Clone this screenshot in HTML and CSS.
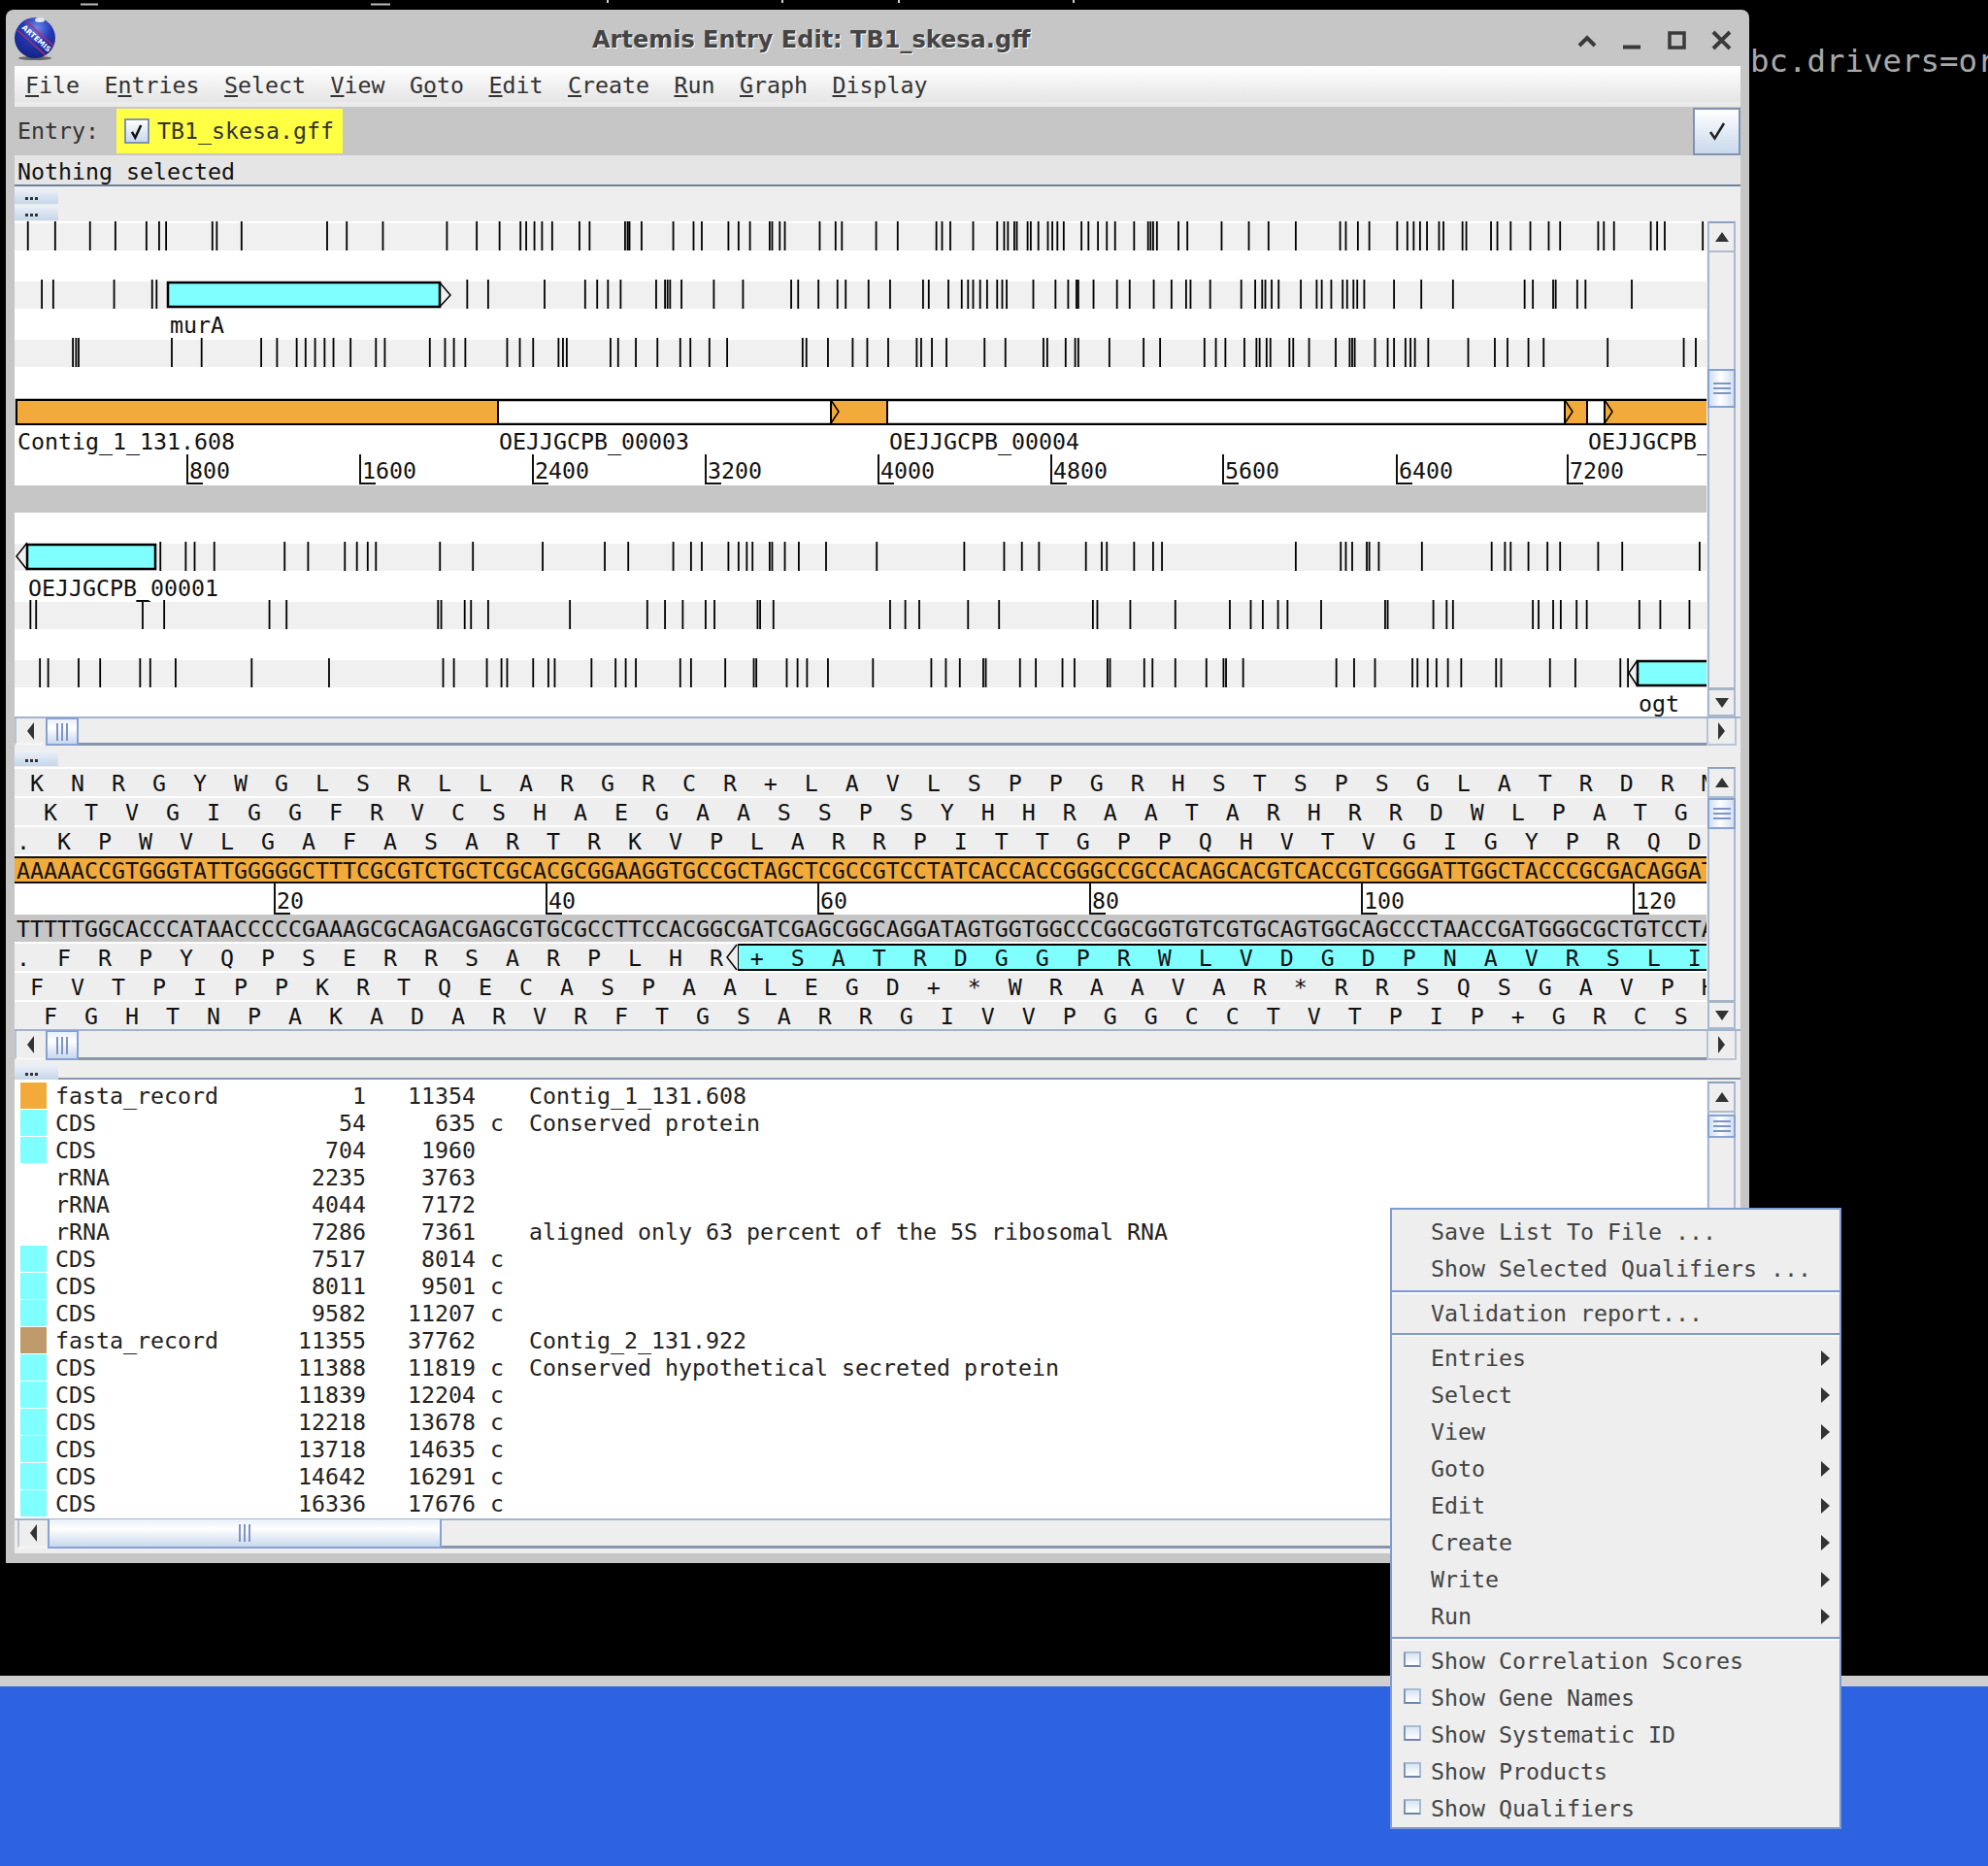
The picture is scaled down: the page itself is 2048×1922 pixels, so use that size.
FILE: index.html
```html
<!DOCTYPE html>
<html lang="en">
<head>
<meta charset="utf-8">
<title>Artemis Entry Edit: TB1_skesa.gff</title>
<link rel="stylesheet" href="styles.css">
</head>
<body>
<div class="desktop">
  <svg class="stray" width="2048" height="8" viewBox="0 0 2048 8"><path d="M83 4.500h18M382 4.500h20" stroke="#bbb" stroke-width="2"/><path d="M626 0v3M806 0v3M926 0v3M1106 0v3" stroke="#ccc" stroke-width="2"/></svg>
  <div class="terminal-text">bc.drivers=or</div>
  <div class="desk-fill"></div>
  <div class="panel-edge"></div>
  <div class="panel"></div>

  <section class="window">
    <header class="titlebar">
      <svg class="logo" width="46" height="46" viewBox="0 0 46 46">
        <defs>
          <radialGradient id="ball" cx="0.55" cy="0.25" r="0.8"><stop offset="0" stop-color="#6f86ea"/><stop offset="0.45" stop-color="#2238b8"/><stop offset="1" stop-color="#14207c"/></radialGradient>
        </defs>
        <ellipse cx="23" cy="43" rx="17" ry="2" fill="#666"/>
        <circle cx="23" cy="22" r="21" fill="url(#ball)"/>
        <path d="M14 5L42 30M5 14L34 40" stroke="#b03060" stroke-width="1.500" fill="none"/>
        <text class="logo-text" x="0" y="0" transform="translate(9 12) rotate(42)">ARTEMIS</text>
        <ellipse cx="28" cy="3.500" rx="5" ry="2.500" fill="#dfe8ef"/>
      </svg>
      <div class="title">Artemis Entry Edit: TB1_skesa.gff</div>
      <svg class="winbtns" width="170" height="24" viewBox="1620 30 170 24">
        <path d="M1627 47l8-8 8 8" fill="none" stroke="#3a3a3a" stroke-width="4"/>
        <path d="M1672 48.500h18" fill="none" stroke="#3a3a3a" stroke-width="4"/>
        <rect x="1720" y="34" width="15" height="15" fill="none" stroke="#3a3a3a" stroke-width="3.500"/>
        <path d="M1765 33l17 17M1782 33l-17 17" fill="none" stroke="#3a3a3a" stroke-width="4"/>
      </svg>
    </header>

    <div class="content">
      <nav class="menubar">
        <span><u>F</u>ile</span><span>E<u>n</u>tries</span><span><u>S</u>elect</span><span><u>V</u>iew</span><span>G<u>o</u>to</span><span><u>E</u>dit</span><span><u>C</u>reate</span><span><u>R</u>un</span><span><u>G</u>raph</span><span><u>D</u>isplay</span>
      </nav>
      <div class="entrybar">
        <span class="entry-label">Entry:</span>
        <span class="entry-chip">
          <svg class="entry-check" width="26" height="26" viewBox="0 0 26 26"><path d="M7 14l4 7L18 6" fill="none" stroke="#111" stroke-width="3"/></svg>
          <span>TB1_skesa.gff</span>
        </span>
        <button class="okbtn" type="button"><svg width="18" height="20" viewBox="0 0 18 20"><path d="M2 11l4.500 6.500L16 2" fill="none" stroke="#222" stroke-width="2.500"/></svg></button>
      </div>
      <div class="status">Nothing selected</div>

      <div class="splitter splitter-double"><span class="grip"><i></i><i></i><i></i></span><span class="grip"><i></i><i></i><i></i></span></div>

      <div class="pane">
        <div class="features">
          <svg class="track" viewBox="15 0 1743 30"><path class="ticks" transform="scale(.6531 1)" d="M44 0v30M87 0v30M142 0v30M182 0v30M231 0v30M251 0v30M262 0v30M335 0v30M342 0v30M381 0v30M516 0v30M547 0v30M604 0v30M705 0v30M752 0v30M788 0v30M821 0v30M830 0v30M843 0v30M855 0v30M871 0v30M914 0v30M930 0v30M986 0v30M990 0v30M993 0v30M1012 0v30M1062 0v30M1094 0v30M1107 0v30M1149 0v30M1165 0v30M1183 0v30M1214 0v30M1218 0v30M1230 0v30M1238 0v30M1293 0v30M1318 0v30M1328 0v30M1382 0v30M1416 0v30M1477 0v30M1486 0v30M1499 0v30M1535 0v30"/><path class="ticks" transform="translate(1024 0) scale(.6531 1)" d="M5 0v30M16 0v30M22 0v30M32 0v30M36 0v30M53 0v30M58 0v30M70 0v30M85 0v30M92 0v30M100 0v30M110 0v30M138 0v30M149 0v30M164 0v30M178 0v30M191 0v30M221 0v30M243 0v30M247 0v30M251 0v30M257 0v30M291 0v30M305 0v30M359 0v30M402 0v30M433 0v30M476 0v30M546 0v30M555 0v30M574 0v30M592 0v30M636 0v30M652 0v30M662 0v30M672 0v30M683 0v30M702 0v30M709 0v30M739 0v30M745 0v30M784 0v30M794 0v30M815 0v30M846 0v30M875 0v30M893 0v30M953 0v30M962 0v30M978 0v30M1036 0v30M1046 0v30M1058 0v30M1118 0v30"/></svg>

          <svg class="track" viewBox="15 0 1743 30"><path class="ticks" transform="scale(.6531 1)" d="M66 0v30M84 0v30M180 0v30M240 0v30M247 0v30M737 0v30M770 0v30M859 0v30M923 0v30M942 0v30M959 0v30M979 0v30M1035 0v30M1049 0v30M1053 0v30M1057 0v30M1075 0v30M1126 0v30M1172 0v30M1248 0v30M1259 0v30M1291 0v30M1321 0v30M1334 0v30M1370 0v30M1404 0v30M1456 0v30M1465 0v30M1496 0v30M1517 0v30M1527 0v30M1535 0v30M1546 0v30M1557 0v30"/><path class="ticks" transform="translate(1024 0) scale(.6531 1)" d="M5 0v30M13 0v30M20 0v30M62 0v30M97 0v30M117 0v30M130 0v30M133 0v30M157 0v30M194 0v30M214 0v30M252 0v30M280 0v30M303 0v30M310 0v30M341 0v30M390 0v30M412 0v30M423 0v30M428 0v30M438 0v30M449 0v30M484 0v30M509 0v30M517 0v30M532 0v30M550 0v30M557 0v30M567 0v30M573 0v30M584 0v30M631 0v30M674 0v30M724 0v30M837 0v30M850 0v30M882 0v30M886 0v30M920 0v30M933 0v30M1006 0v30"/><rect class="cds" x="173" y="3" width="280" height="25"/><path class="chev" d="M453 3l11 13-11 12"/></svg>

          <svg class="track" viewBox="15 0 1743 30"><path class="ticks" transform="scale(.6531 1)" d="M115 0v30M120 0v30M124 0v30M271 0v30M318 0v30M412 0v30M437 0v30M468 0v30M482 0v30M497 0v30M512 0v30M526 0v30M553 0v30M593 0v30M607 0v30M678 0v30M702 0v30M716 0v30M734 0v30M800 0v30M820 0v30M841 0v30M881 0v30M888 0v30M894 0v30M963 0v30M975 0v30M1003 0v30M1037 0v30M1073 0v30M1089 0v30M1119 0v30M1147 0v30M1266 0v30M1272 0v30M1306 0v30M1345 0v30M1368 0v30M1401 0v30M1446 0v30M1453 0v30M1470 0v30M1493 0v30M1553 0v30"/><path class="ticks" transform="translate(1024 0) scale(.6531 1)" d="M18 0v30M78 0v30M84 0v30M113 0v30M128 0v30M133 0v30M182 0v30M236 0v30M262 0v30M332 0v30M350 0v30M365 0v30M395 0v30M414 0v30M419 0v30M430 0v30M436 0v30M466 0v30M472 0v30M497 0v30M539 0v30M561 0v30M565 0v30M569 0v30M601 0v30M621 0v30M631 0v30M649 0v30M657 0v30M664 0v30M685 0v30M748 0v30M790 0v30M810 0v30M843 0v30M867 0v30M968 0v30M1088 0v30M1107 0v30"/></svg>

          <svg class="dnaline" viewBox="15 0 1743 30">
            <rect class="dna-bg" x="17" y="4" width="1745" height="25"/>
            <rect class="contig" x="17" y="4" width="496" height="25"/>
            <rect class="contig" x="856" y="4" width="58" height="25"/>
            <rect class="contig" x="1612" y="4" width="23" height="25"/>
            <rect class="contig" x="1653" y="4" width="107" height="25"/>
            <path class="chev" d="M856 4l8 12-8 12M1612 4l8 12-8 12M1653 4l8 12-8 12"/>
          </svg>
          <div class="grayband"></div>

          <svg class="track track-rev" viewBox="15 0 1743 30"><path class="ticks" transform="scale(.6531 1)" d="M253 0v30M293 0v30M307 0v30M338 0v30M449 0v30M486 0v30M544 0v30M563 0v30M580 0v30M593 0v30M694 0v30M746 0v30M856 0v30M954 0v30M991 0v30M1062 0v30M1090 0v30M1107 0v30M1149 0v30M1165 0v30M1178 0v30M1187 0v30M1214 0v30M1218 0v30M1238 0v30M1260 0v30M1303 0v30M1383 0v30M1521 0v30"/><path class="ticks" transform="translate(1024 0) scale(.6531 1)" d="M16 0v30M44 0v30M71 0v30M145 0v30M170 0v30M178 0v30M221 0v30M251 0v30M265 0v30M476 0v30M547 0v30M555 0v30M565 0v30M588 0v30M592 0v30M607 0v30M675 0v30M785 0v30M806 0v30M815 0v30M843 0v30M873 0v30M893 0v30M953 0v30M991 0v30M1113 0v30"/><rect class="cds" x="28" y="3" width="132" height="25"/><path class="chev" d="M28 1l-11 14 11 14"/></svg>

          <svg class="track" viewBox="15 0 1743 30"><path class="ticks" transform="scale(.6531 1)" d="M48 0v30M57 0v30M225 0v30M215 1h20M259 0v30M425 0v30M452 0v30M691 0v30M696 0v30M733 0v30M743 0v30M770 0v30M899 0v30M1021 0v30M1049 0v30M1077 0v30M1113 0v30M1127 0v30M1195 0v30M1199 0v30M1220 0v30M1404 0v30M1428 0v30M1450 0v30M1527 0v30"/><path class="ticks" transform="translate(1024 0) scale(.6531 1)" d="M8 0v30M156 0v30M163 0v30M215 0v30M286 0v30M372 0v30M405 0v30M424 0v30M448 0v30M463 0v30M516 0v30M617 0v30M621 0v30M693 0v30M714 0v30M724 0v30M850 0v30M859 0v30M882 0v30M894 0v30M919 0v30M935 0v30M1018 0v30M1051 0v30M1097 0v30"/></svg>

          <svg class="track" viewBox="15 0 1743 30"><path class="ticks" transform="scale(.6531 1)" d="M63 0v30M76 0v30M124 0v30M158 0v30M221 0v30M237 0v30M277 0v30M397 0v30M519 0v30M699 0v30M716 0v30M768 0v30M791 0v30M800 0v30M841 0v30M865 0v30M875 0v30M933 0v30M971 0v30M987 0v30M1003 0v30M1073 0v30M1090 0v30M1144 0v30M1189 0v30M1193 0v30M1241 0v30M1258 0v30M1273 0v30M1306 0v30M1377 0v30M1469 0v30M1492 0v30M1514 0v30M1551 0v30M1555 0v30"/><path class="ticks" transform="translate(1024 0) scale(.6531 1)" d="M41 0v30M66 0v30M108 0v30M127 0v30M179 0v30M183 0v30M237 0v30M250 0v30M286 0v30M335 0v30M362 0v30M366 0v30M393 0v30M540 0v30M568 0v30M601 0v30M660 0v30M668 0v30M684 0v30M698 0v30M716 0v30M737 0v30M792 0v30M800 0v30M877 0v30M917 0v30M988 0v30M1000 0v30"/><rect class="cds" x="1687" y="3" width="80" height="25"/><path class="chev" d="M1687 2l-9 13 9 14"/></svg>

          <span class="lbl" style="left:160px;top:93px">murA</span>
          <span class="lbl" style="left:3px;top:213px">Contig_1_131.608</span>
          <span class="lbl" style="left:499px;top:213px">OEJJGCPB_00003</span>
          <span class="lbl" style="left:901px;top:213px">OEJJGCPB_00004</span>
          <span class="lbl" style="left:1621px;top:213px">OEJJGCPB_00005</span>
          <span class="lbl" style="left:14px;top:364px">OEJJGCPB_00001</span>
          <span class="lbl" style="left:1673px;top:483px">ogt</span>

          <span class="tick" style="left:178px;top:240px">800</span>
          <span class="tick" style="left:356px;top:240px">1600</span>
          <span class="tick" style="left:534px;top:240px">2400</span>
          <span class="tick" style="left:712px;top:240px">3200</span>
          <span class="tick" style="left:890px;top:240px">4000</span>
          <span class="tick" style="left:1068px;top:240px">4800</span>
          <span class="tick" style="left:1245px;top:240px">5600</span>
          <span class="tick" style="left:1424px;top:240px">6400</span>
          <span class="tick" style="left:1600px;top:240px">7200</span>
        </div>
        <div class="vbar">
          <div class="sbtn"><b class="tri-up"></b></div>
          <div class="vtrack vtrack-features"><div class="vthumb"><i class="lines-h"></i></div></div>
          <div class="sbtn"><b class="tri-down"></b></div>
        </div>
      </div>
      <div class="hbar">
        <div class="hbtn"><b class="tri-left"></b></div><div class="hthumb"><i class="lines-v"></i></div><div class="htrack"></div><div class="hbtn hbtn-end"><b class="tri-right"></b></div>
      </div>

      <div class="splitter"><span class="grip"><i></i><i></i><i></i></span></div>

      <div class="pane pane-bases">
        <div class="bases">
<div class="seq"> K  N  R  G  Y  W  G  L  S  R  L  L  A  R  G  R  C  R  +  L  A  V  L  S  P  P  G  R  H  S  T  S  P  S  G  L  A  T  R  D  R  M</div>
<div class="seq">  K  T  V  G  I  G  G  F  R  V  C  S  H  A  E  G  A  A  S  S  P  S  Y  H  H  R  A  A  T  A  R  H  R  R  D  W  L  P  A  T  G</div>
<div class="seq">.  K  P  W  V  L  G  A  F  A  S  A  R  T  R  K  V  P  L  A  R  R  P  I  T  T  G  P  P  Q  H  V  T  V  G  I  G  Y  P  R  Q  D</div>
<div class="seq dna">AAAAACCGTGGGTATTGGGGGCTTTCGCGTCTGCTCGCACGCGGAAGGTGCCGCTAGCTCGCCGTCCTATCACCACCGGGCCGCCACAGCACGTCACCGTCGGGATTGGCTACCCGCGACAGGAT</div>
<div class="basescale"><span class="tick tick-base" style="left:268px">20</span><span class="tick tick-base" style="left:548px">40</span><span class="tick tick-base" style="left:828px">60</span><span class="tick tick-base" style="left:1108px">80</span><span class="tick tick-base" style="left:1388px">100</span><span class="tick tick-base" style="left:1668px">120</span></div>
<div class="seq dnarev">TTTTTGGCACCCATAACCCCCGAAAGCGCAGACGAGCGTGCGCCTTCCACGGCGATCGAGCGGCAGGATAGTGGTGGCCCGGCGGTGTCGTGCAGTGGCAGCCCTAACCGATGGGCGCTGTCCTA</div>
<div class="seq"><span class="seqbox"><svg class="seqchev" width="12" height="28" viewBox="0 0 12 28"><path d="M11 1L1 14l10 13" fill="none" stroke="#000" stroke-width="1.500"/></svg></span><span class="seqtext">.  F  R  P  Y  Q  P  S  E  R  R  S  A  R  P  L  H  R  +  S  A  T  R  D  G  G  P  R  W  L  V  D  G  D  P  N  A  V  R  S  L  I</span></div>
<div class="seq"> F  V  T  P  I  P  P  K  R  T  Q  E  C  A  S  P  A  A  L  E  G  D  +  *  W  R  A  A  V  A  R  *  R  R  S  Q  S  G  A  V  P  H</div>
<div class="seq">  F  G  H  T  N  P  A  K  A  D  A  R  V  R  F  T  G  S  A  R  R  G  I  V  V  P  G  G  C  C  T  V  T  P  I  P  +  G  R  C  S</div>
        </div>
        <div class="vbar">
          <div class="sbtn"><b class="tri-up"></b></div>
          <div class="vtrack"><div class="vthumb vthumb-small"><i class="lines-h"></i></div></div>
          <div class="sbtn"><b class="tri-down"></b></div>
        </div>
      </div>
      <div class="hbar hbar-bases">
        <div class="hbtn"><b class="tri-left"></b></div><div class="hthumb"><i class="lines-v"></i></div><div class="htrack"></div><div class="hbtn hbtn-end"><b class="tri-right"></b></div>
      </div>

      <div class="splitter splitter-list"><span class="grip"><i></i><i></i><i></i></span></div>

      <div class="pane pane-list">
        <div class="list">
          <div class="row"><i class="sw sw-orange"></i><span>fasta_record</span><span class="num">1</span><span class="num">11354</span><span></span><span>Contig_1_131.608</span></div>
          <div class="row"><i class="sw"></i><span>CDS</span><span class="num">54</span><span class="num">635</span><span>c</span><span>Conserved protein</span></div>
          <div class="row"><i class="sw"></i><span>CDS</span><span class="num">704</span><span class="num">1960</span><span></span><span></span></div>
          <div class="row"><i class="sw sw-none"></i><span>rRNA</span><span class="num">2235</span><span class="num">3763</span><span></span><span></span></div>
          <div class="row"><i class="sw sw-none"></i><span>rRNA</span><span class="num">4044</span><span class="num">7172</span><span></span><span></span></div>
          <div class="row"><i class="sw sw-none"></i><span>rRNA</span><span class="num">7286</span><span class="num">7361</span><span></span><span>aligned only 63 percent of the 5S ribosomal RNA</span></div>
          <div class="row"><i class="sw"></i><span>CDS</span><span class="num">7517</span><span class="num">8014</span><span>c</span><span></span></div>
          <div class="row"><i class="sw"></i><span>CDS</span><span class="num">8011</span><span class="num">9501</span><span>c</span><span></span></div>
          <div class="row"><i class="sw"></i><span>CDS</span><span class="num">9582</span><span class="num">11207</span><span>c</span><span></span></div>
          <div class="row"><i class="sw sw-brown"></i><span>fasta_record</span><span class="num">11355</span><span class="num">37762</span><span></span><span>Contig_2_131.922</span></div>
          <div class="row"><i class="sw"></i><span>CDS</span><span class="num">11388</span><span class="num">11819</span><span>c</span><span>Conserved hypothetical secreted protein</span></div>
          <div class="row"><i class="sw"></i><span>CDS</span><span class="num">11839</span><span class="num">12204</span><span>c</span><span></span></div>
          <div class="row"><i class="sw"></i><span>CDS</span><span class="num">12218</span><span class="num">13678</span><span>c</span><span></span></div>
          <div class="row"><i class="sw"></i><span>CDS</span><span class="num">13718</span><span class="num">14635</span><span>c</span><span></span></div>
          <div class="row"><i class="sw"></i><span>CDS</span><span class="num">14642</span><span class="num">16291</span><span>c</span><span></span></div>
          <div class="row"><i class="sw"></i><span>CDS</span><span class="num">16336</span><span class="num">17676</span><span>c</span><span></span></div>
        </div>
        <div class="vbar">
          <div class="sbtn sbtn-list"><b class="tri-up"></b></div>
          <div class="vtrack"><div class="vthumb vthumb-list"><i class="lines-h"></i></div></div>
        </div>
      </div>
      <div class="hbar hbar-list">
        <div class="hbtn"><b class="tri-left"></b></div><div class="hthumb hthumb-list"><i class="lines-v"></i></div><div class="htrack"></div>
      </div>
    </div>
  </section>

  <div class="popup">
    <div class="item item-first">Save List To File ...</div>
    <div class="item">Show Selected Qualifiers ...</div>
    <div class="sep sep-a"></div>
    <div class="item">Validation report...</div>
    <div class="sep sep-b"></div>
    <div class="item">Entries<b class="tri-sub"></b></div>
    <div class="item">Select<b class="tri-sub"></b></div>
    <div class="item">View<b class="tri-sub"></b></div>
    <div class="item">Goto<b class="tri-sub"></b></div>
    <div class="item">Edit<b class="tri-sub"></b></div>
    <div class="item">Create<b class="tri-sub"></b></div>
    <div class="item">Write<b class="tri-sub"></b></div>
    <div class="item">Run<b class="tri-sub"></b></div>
    <div class="sep sep-c"></div>
    <div class="item item-check"><i class="cb"></i>Show Correlation Scores</div>
    <div class="item item-check"><i class="cb"></i>Show Gene Names</div>
    <div class="item item-check"><i class="cb"></i>Show Systematic ID</div>
    <div class="item item-check"><i class="cb"></i>Show Products</div>
    <div class="item item-check"><i class="cb"></i>Show Qualifiers</div>
  </div>
</div>
</body>
</html>
```

FILE: styles.css
```css
* { box-sizing: border-box; }
html, body { margin: 0; padding: 0; background: #000; }

.desktop {
  position: relative;
  width: 2048px;
  height: 1922px;
  overflow: hidden;
  display: flex;
  flex-direction: column;
  background: #000;
  font-family: "DejaVu Sans Mono", "Liberation Mono", monospace;
  font-size: 23.25px;
  line-height: 28px;
  color: #111;
}
.desk-fill { height: 1726px; }
.panel-edge { height: 11px; background: #cfcfcf; }
.panel { flex: 1; background: #2d62e0; }
.stray { position: absolute; left: 0; top: 0; }
.terminal-text {
  position: absolute;
  left: 1803px;
  top: 43px;
  font-size: 32.4px;
  line-height: 40px;
  color: #a8a8a8;
  white-space: pre;
}

/* window */
.window {
  position: absolute;
  left: 6px;
  top: 10px;
  width: 1796px;
  height: 1600px;
  background: #c6c6c6;
  border-radius: 8px 8px 0 0;
  display: flex;
  flex-direction: column;
}
.titlebar {
  height: 58px;
  display: flex;
  align-items: flex-start;
  position: relative;
}
.logo { margin: 7px 0 0 7px; flex: none; }
.logo-text { font-family: "DejaVu Sans", sans-serif; font-weight: 700; font-size: 7.500px; fill: #fff; }
.title {
  margin: 17px 0 0 551px;
  font-family: "DejaVu Sans", sans-serif;
  font-weight: 700;
  font-size: 24px;
  line-height: 28px;
  color: #444;
  text-shadow: 1px 1px 0 #fff;
  white-space: pre;
}
.winbtns { margin: 20px 12px 0 auto; flex: none; }

.content {
  width: 1778px;
  margin-left: 9px;
  background: #eee;
  flex: none;
  height: 1532px;
}

/* menu + toolbars */
.menubar {
  height: 42px;
  display: flex;
  gap: 25.500px;
  padding: 6px 0 0 11px;
  background: linear-gradient(#fff, #e6e6e6 36px, #eee 39px);
  border-bottom: 3px solid #eaeaea;
  color: #333;
  white-space: pre;
}
.entrybar {
  height: 50px;
  background: #c6c6c6;
  display: flex;
  align-items: center;
  color: #333;
  position: relative;
}
.entry-label { margin-left: 3px; width: 102px; }
.entry-chip {
  height: 46px;
  width: 233px;
  background: #ffff44;
  display: flex;
  align-items: center;
  gap: 8px;
  padding-left: 8px;
  color: #333;
}
.entry-check {
  flex: none;
  background: linear-gradient(#fff, #c8d8ec);
  border: 2px solid #7f93b0;
}
.okbtn {
  margin: 0 0 0 auto;
  width: 49px;
  height: 49px;
  padding: 0;
  border: 2px solid #7f93b0;
  background: linear-gradient(#fff, #c8d8ec);
  display: flex;
  align-items: center;
  justify-content: center;
}
.status {
  height: 32px;
  background: #e5e5e5;
  border-bottom: 2px solid #6e829c;
  padding: 3px 0 0 3px;
  line-height: 27px;
  white-space: pre;
}

/* splitters */
.splitter {
  height: 22px;
  background: #eee;
  padding-top: 5px;
  display: flex;
  flex-direction: column;
  gap: 1px;
}
.splitter-double { height: 36px; padding-top: 2px; }
.splitter-list { height: 20px; padding-top: 4px; border-bottom: 2px solid #8796ab; }
.grip {
  width: 45px;
  height: 16px;
  flex: none;
  background: linear-gradient(#eef2f8, #c6d6ea);
  display: flex;
  gap: 2px;
  padding: 9px 0 0 11px;
}
.grip i { width: 3px; height: 3px; background: #333; }

/* panes */
.pane { display: flex; height: 510px; background: #fff; }
.pane-bases { height: 270px; }
.pane-list { height: 452px; }

.features { position: relative; width: 1743px; height: 510px; overflow: hidden; background: #fff; }
.track {
  display: block;
  width: 1743px;
  height: 30px;
  margin-bottom: 30px;
  background: linear-gradient(#fff 2px, #f0f0f0 2px);
}
.ticks { stroke: #000; stroke-width: 1.800; fill: none; vector-effect: non-scaling-stroke; }
.cds { fill: #7fffff; stroke: #000; stroke-width: 2.500; }
.chev { fill: none; stroke: #000; stroke-width: 1.500; }
.dnaline { display: block; width: 1743px; height: 30px; }
.dna-bg { fill: #fff; stroke: #000; stroke-width: 2.500; }
.contig { fill: #f2ab3b; stroke: #000; stroke-width: 2; }
.grayband { height: 28px; margin: 62px 0 30px; background: #c6c6c6; }

.lbl, .tick { position: absolute; white-space: pre; }
.tick {
  height: 31px;
  margin-left: -1px;
  padding: 3px 0 0 1px;
  border-left: 2px solid #111;
  line-height: 28px;
}
.tick::after {
  content: "";
  position: absolute;
  left: 0;
  bottom: 0;
  width: 15px;
  height: 2px;
  background: #111;
}

/* scrollbars */
.vbar {
  width: 35px;
  flex: none;
  display: flex;
  flex-direction: column;
  background: #eee;
  padding-right: 5px;
}
.sbtn {
  height: 30px;
  flex: none;
  margin-left: 1px;
  border-left: 2px solid #a8b8d0;
  border-right: 2px solid #a8b8d0;
  border-top: 2px solid #8ea2c0;
  display: flex;
  align-items: center;
  justify-content: center;
  background: #eee;
}
.sbtn:last-child { border-top: 3px solid #a8b4c6; border-bottom: 2px solid #a8b8d0; }
.sbtn-list { margin-top: 2px; height: 30px; }
.sbtn-list:last-child { border-bottom: 0; }
.vtrack {
  flex: 1;
  margin-left: 1px;
  border-left: 2px solid #a8b8d0;
  border-right: 2px solid #a8b8d0;
  border-top: 2px solid #b0bccc;
  background: #eee;
}
.vtrack-features { padding-top: 120px; }
.vthumb {
  height: 40px;
  margin: 0 -2px;
  border: 2px solid #86a1d6;
  background: linear-gradient(90deg, #cfe0f2, #fff 45%, #d2e0f0);
  display: flex;
  align-items: center;
  justify-content: center;
}
.vthumb-small { height: 32px; }
.vthumb-list { height: 24px; margin-top: 2px; }
.lines-h {
  width: 18px;
  height: 12px;
  background: repeating-linear-gradient(#7f93c8 0 2px, transparent 2px 5px);
}
.lines-v {
  width: 12px;
  height: 18px;
  background: repeating-linear-gradient(90deg, #7f93c8 0 2px, transparent 2px 5px);
}
.hbar {
  height: 30px;
  display: flex;
  background: #eee;
  border-top: 2px solid #a3b3cc;
  padding-right: 4px;
}
.hbar-bases { height: 32px; }
.hbar-list { height: 31px; padding-left: 3px; border-top: 2px solid #a3b3cc; }
.hbtn {
  width: 30px;
  flex: none;
  border-left: 2px solid #b8c4d4;
  display: flex;
  align-items: center;
  justify-content: center;
  border-bottom: 3px solid #f4f4f4;
}
.hbtn-end { width: 31px; border-right: 2px solid #b8c4d4; border-bottom: 2px solid #b8c4d4; }
.hthumb {
  width: 34px;
  flex: none;
  margin: -1px 0 0 2px;
  border: 2px solid #86a1d6;
  background: linear-gradient(#e8f0fa, #fff 35%, #c8d8ec);
  display: flex;
  align-items: center;
  justify-content: center;
}
.hthumb-list { width: 406px; margin-left: 1px; border-width: 0 2px 2px; }
.htrack { flex: 1; border-bottom: 3px solid #8796ab; }
.tri-up, .tri-down, .tri-left, .tri-right, .tri-sub { display: block; width: 0; height: 0; border-style: solid; border-color: transparent; }
.tri-up { border-width: 0 7px 10px; border-bottom-color: #333; }
.tri-down { border-width: 10px 7px 0; border-top-color: #333; }
.tri-left { border-width: 9px 7px 9px 0; border-right-color: #333; }
.tri-right { border-width: 9px 0 9px 7px; border-left-color: #333; }

/* base view */
.bases { width: 1743px; height: 270px; padding-top: 2px; background: #fff; overflow: hidden; }
.seq {
  position: relative;
  height: 28px;
  margin-bottom: 2px;
  padding-left: 2px;
  background: #eee;
  line-height: 30px;
  white-space: pre;
  overflow: hidden;
}
.dna { background: #f2ab3b; border-top: 2px solid #111; border-bottom: 2px solid #111; line-height: 26px; margin-bottom: 0; }
.dnarev { background: #c6c6c6; }
.basescale { position: relative; height: 32px; background: #fff; }
.tick-base { top: 0; height: 32px; padding-top: 4px; }
.seqbox {
  position: absolute;
  left: 744px;
  right: 0;
  top: 0;
  bottom: 0;
  background: #7fffff;
  border-top: 2px solid #000;
  border-bottom: 2px solid #000;
  border-left: 2px solid #000;
}
.seqchev { position: absolute; left: -13px; top: -2px; background: #eee; }
.seqtext { position: relative; }

/* list */
.list { width: 1743px; padding: 3px 0 0 6px; background: #fff; overflow: hidden; }
.row {
  display: grid;
  grid-template-columns: 27px 220px 109px 113px 28px 1fr;
  column-gap: 0;
  height: 28px;
  white-space: pre;
  color: #222;
}
.row > span:nth-child(2) { margin-left: 9px; }
.row > span:nth-child(5) { padding-left: 15px; }
.row > span:last-child { padding-left: 27px; }
.num { text-align: right; }
.sw { height: 27px; background: #7fffff; }
.sw-orange { background: #f2ab3b; }
.sw-brown { background: #bf9b6b; }
.sw-none { background: transparent; }

/* popup menu */
.popup {
  position: absolute;
  left: 1432px;
  top: 1244px;
  width: 465px;
  height: 640px;
  background: #eee;
  border: 2px solid #7e9bd2;
  color: #444;
  padding-top: 4px;
}
.item {
  height: 38px;
  line-height: 38px;
  padding-left: 40px;
  padding-right: 10px;
  display: flex;
  align-items: center;
  justify-content: space-between;
  white-space: pre;
}
.item-check { padding-left: 12px; justify-content: flex-start; }
.cb {
  width: 18px;
  height: 16px;
  margin-right: 10px;
  margin-top: -4px;
  flex: none;
  background: linear-gradient(#d8e4f2, #fff);
  border: 2px solid #a9bad4;
  border-left-color: #7e96bc;
  border-bottom-color: #6f83a2;
}
.tri-sub { border-width: 8px 0 8px 9px; border-left-color: #333; }
.sep { height: 2px; background: #7e9bd2; box-shadow: 0 2px 0 #f8f8f8; }
.sep-a { margin: 3px 0 3px; }
.sep-b { margin: 1px 0 5px; }
.sep-c { margin: 2px 0 4px; }
```
